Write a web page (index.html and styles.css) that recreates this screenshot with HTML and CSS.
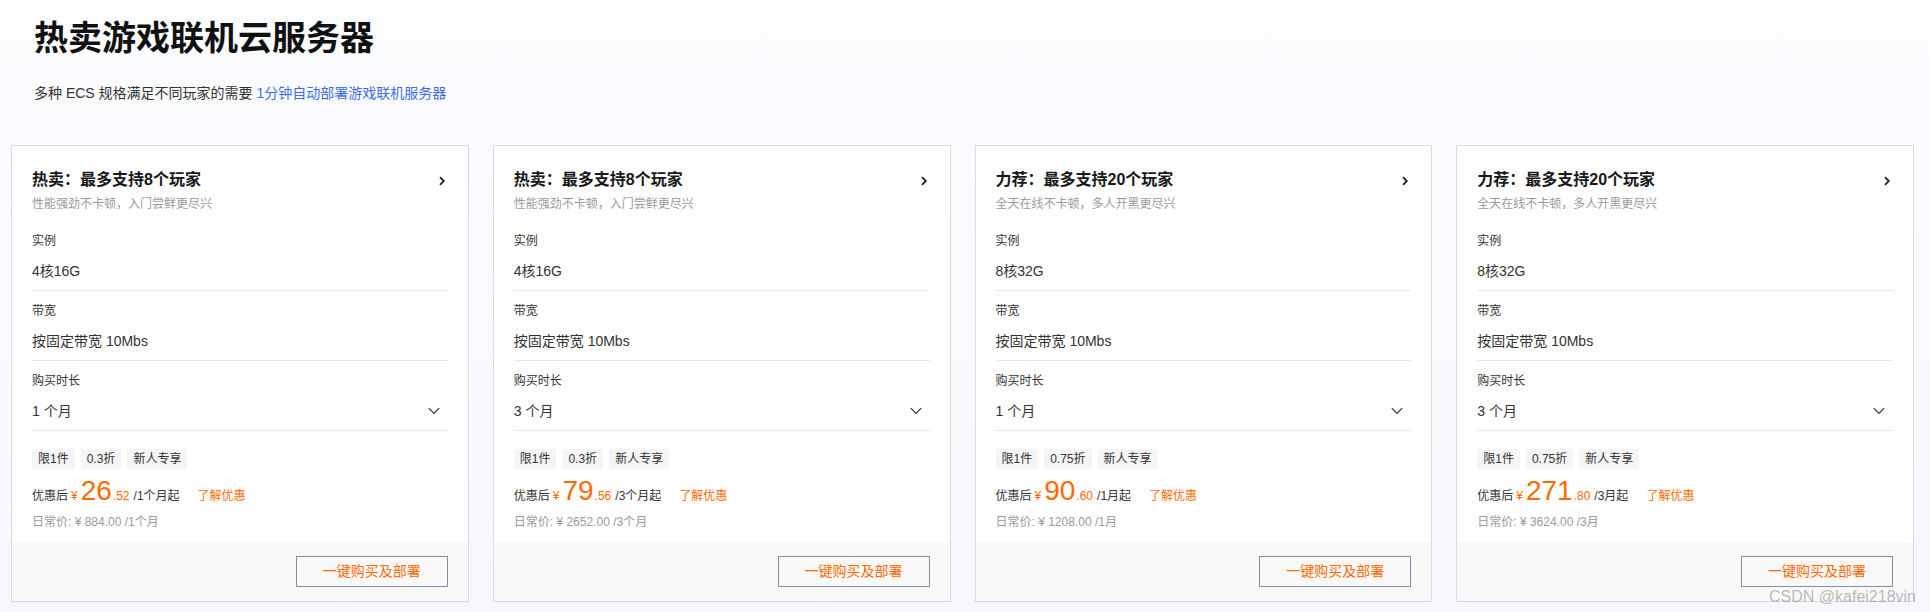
FILE: index.html
```html
<!DOCTYPE html>
<html lang="zh-CN">
<head>
<meta charset="utf-8">
<title>热卖游戏联机云服务器</title>
<link rel="stylesheet" href="styles.css">
</head>
<body>
<div class="page">
  <header class="hero">
    <h1 class="hero-title">热卖游戏联机云服务器</h1>
    <p class="hero-sub">多种 ECS 规格满足不同玩家的需要 <a class="hero-link" href="#">1分钟自动部署游戏联机服务器</a></p>
  </header>

  <section class="cards">
    <!-- card 1 -->
    <div class="card">
      <div class="card-body">
        <div class="card-head">
          <div class="card-title">热卖：最多支持8个玩家</div>
          <svg class="arrow-right" width="12" height="12" viewBox="0 0 12 12"><path d="M4 2.2 L7.8 6 L4 9.8" fill="none" stroke="#222" stroke-width="1.8"/></svg>
        </div>
        <div class="card-desc">性能强劲不卡顿，入门尝鲜更尽兴</div>
        <div class="spec spec-first">
          <div class="spec-label">实例</div>
          <div class="spec-value">4核16G</div>
        </div>
        <div class="spec">
          <div class="spec-label">带宽</div>
          <div class="spec-value">按固定带宽 10Mbs</div>
        </div>
        <div class="spec">
          <div class="spec-label">购买时长</div>
          <div class="spec-value select"><span>1 个月</span><svg class="arrow-down" width="12" height="8" viewBox="0 0 12 8"><path d="M0.8 1.2 L6 6.4 L11.2 1.2" fill="none" stroke="#333" stroke-width="1.2"/></svg></div>
        </div>
        <div class="tags"><span class="tag">限1件</span><span class="tag">0.3折</span><span class="tag">新人专享</span></div>
        <div class="price">
          <span class="price-label">优惠后</span><span class="yen">¥</span><span class="big">26</span><span class="cents">.52</span><span class="unit">/1个月起</span><a class="more" href="#">了解优惠</a>
        </div>
        <div class="regular">日常价: ¥ 884.00 /1个月</div>
      </div>
      <div class="card-foot"><a class="buy" href="#">一键购买及部署</a></div>
    </div>

    <!-- card 2 -->
    <div class="card">
      <div class="card-body">
        <div class="card-head">
          <div class="card-title">热卖：最多支持8个玩家</div>
          <svg class="arrow-right" width="12" height="12" viewBox="0 0 12 12"><path d="M4 2.2 L7.8 6 L4 9.8" fill="none" stroke="#222" stroke-width="1.8"/></svg>
        </div>
        <div class="card-desc">性能强劲不卡顿，入门尝鲜更尽兴</div>
        <div class="spec spec-first">
          <div class="spec-label">实例</div>
          <div class="spec-value">4核16G</div>
        </div>
        <div class="spec">
          <div class="spec-label">带宽</div>
          <div class="spec-value">按固定带宽 10Mbs</div>
        </div>
        <div class="spec">
          <div class="spec-label">购买时长</div>
          <div class="spec-value select"><span>3 个月</span><svg class="arrow-down" width="12" height="8" viewBox="0 0 12 8"><path d="M0.8 1.2 L6 6.4 L11.2 1.2" fill="none" stroke="#333" stroke-width="1.2"/></svg></div>
        </div>
        <div class="tags"><span class="tag">限1件</span><span class="tag">0.3折</span><span class="tag">新人专享</span></div>
        <div class="price">
          <span class="price-label">优惠后</span><span class="yen">¥</span><span class="big">79</span><span class="cents">.56</span><span class="unit">/3个月起</span><a class="more" href="#">了解优惠</a>
        </div>
        <div class="regular">日常价: ¥ 2652.00 /3个月</div>
      </div>
      <div class="card-foot"><a class="buy" href="#">一键购买及部署</a></div>
    </div>

    <!-- card 3 -->
    <div class="card">
      <div class="card-body">
        <div class="card-head">
          <div class="card-title">力荐：最多支持20个玩家</div>
          <svg class="arrow-right" width="12" height="12" viewBox="0 0 12 12"><path d="M4 2.2 L7.8 6 L4 9.8" fill="none" stroke="#222" stroke-width="1.8"/></svg>
        </div>
        <div class="card-desc">全天在线不卡顿，多人开黑更尽兴</div>
        <div class="spec spec-first">
          <div class="spec-label">实例</div>
          <div class="spec-value">8核32G</div>
        </div>
        <div class="spec">
          <div class="spec-label">带宽</div>
          <div class="spec-value">按固定带宽 10Mbs</div>
        </div>
        <div class="spec">
          <div class="spec-label">购买时长</div>
          <div class="spec-value select"><span>1 个月</span><svg class="arrow-down" width="12" height="8" viewBox="0 0 12 8"><path d="M0.8 1.2 L6 6.4 L11.2 1.2" fill="none" stroke="#333" stroke-width="1.2"/></svg></div>
        </div>
        <div class="tags"><span class="tag">限1件</span><span class="tag">0.75折</span><span class="tag">新人专享</span></div>
        <div class="price">
          <span class="price-label">优惠后</span><span class="yen">¥</span><span class="big">90</span><span class="cents">.60</span><span class="unit">/1月起</span><a class="more" href="#">了解优惠</a>
        </div>
        <div class="regular">日常价: ¥ 1208.00 /1月</div>
      </div>
      <div class="card-foot"><a class="buy" href="#">一键购买及部署</a></div>
    </div>

    <!-- card 4 -->
    <div class="card">
      <div class="card-body">
        <div class="card-head">
          <div class="card-title">力荐：最多支持20个玩家</div>
          <svg class="arrow-right" width="12" height="12" viewBox="0 0 12 12"><path d="M4 2.2 L7.8 6 L4 9.8" fill="none" stroke="#222" stroke-width="1.8"/></svg>
        </div>
        <div class="card-desc">全天在线不卡顿，多人开黑更尽兴</div>
        <div class="spec spec-first">
          <div class="spec-label">实例</div>
          <div class="spec-value">8核32G</div>
        </div>
        <div class="spec">
          <div class="spec-label">带宽</div>
          <div class="spec-value">按固定带宽 10Mbs</div>
        </div>
        <div class="spec">
          <div class="spec-label">购买时长</div>
          <div class="spec-value select"><span>3 个月</span><svg class="arrow-down" width="12" height="8" viewBox="0 0 12 8"><path d="M0.8 1.2 L6 6.4 L11.2 1.2" fill="none" stroke="#333" stroke-width="1.2"/></svg></div>
        </div>
        <div class="tags"><span class="tag">限1件</span><span class="tag">0.75折</span><span class="tag">新人专享</span></div>
        <div class="price">
          <span class="price-label">优惠后</span><span class="yen">¥</span><span class="big">271</span><span class="cents">.80</span><span class="unit">/3月起</span><a class="more" href="#">了解优惠</a>
        </div>
        <div class="regular">日常价: ¥ 3624.00 /3月</div>
      </div>
      <div class="card-foot"><a class="buy" href="#">一键购买及部署</a></div>
    </div>
  </section>
  <div class="watermark">CSDN @kafei218vin</div>
</div>
</body>
</html>
```

FILE: styles.css
```css
* { box-sizing: border-box; }

html, body {
  margin: 0;
  padding: 0;
}

body {
  background: linear-gradient(180deg, #fcfdff 0%, #f7f8fd 100%);
  font-family: "Liberation Sans", "Noto Sans CJK SC", Arial, sans-serif;
  color: #333;
  width: 1930px;
  height: 612px;
  overflow: hidden;
}

.page {
  position: relative;
  height: 612px;
  padding: 0 16px 0 11px;
}

.hero {
  padding: 16px 23px 0;
}

.hero-title {
  margin: 0;
  font-size: 34px;
  line-height: 44px;
  font-weight: 700;
  color: #111;
}

.hero-sub {
  margin: 22px 0 0;
  font-size: 14px;
  line-height: 22px;
  color: #333;
}

.hero-link {
  color: #3b6cf3;
  text-decoration: none;
}

.cards {
  margin-top: 41px;
  display: grid;
  grid-template-columns: repeat(4, 1fr);
  column-gap: 24px;
}

.card {
  background: #fff;
  border: 1px solid #d9dbe3;
  display: flex;
  flex-direction: column;
  height: 457px;
}

.card-body {
  padding: 22px 20px 0;
  flex: 1;
}

.card-head {
  display: flex;
  align-items: center;
  justify-content: space-between;
  height: 24px;
}

.card-title {
  font-size: 16px;
  line-height: 24px;
  font-weight: 700;
  color: #181818;
}

.arrow-right {
  display: block;
  margin-top: 2px;
}

.card-desc {
  margin-top: 2px;
  font-size: 12px;
  line-height: 20px;
  color: #9a9a9a;
}

.spec {
  padding: 10px 0 9px;
  border-bottom: 1px solid #e8e8ea;
}

.spec-first {
  margin-top: 7px;
}

.spec-label {
  font-size: 12px;
  line-height: 20px;
  color: #333;
}

.spec-value {
  margin-top: 10px;
  font-size: 14px;
  line-height: 20px;
  color: #333;
}

.select {
  display: flex;
  align-items: center;
  justify-content: space-between;
}

.arrow-down {
  display: block;
  margin-right: 8px;
}

.tags {
  margin-top: 18px;
  display: flex;
  gap: 6px;
}

.tag {
  display: inline-block;
  height: 20px;
  line-height: 20px;
  padding: 0 6px;
  font-size: 12px;
  color: #333;
  background: #f5f5f6;
}

.price {
  margin-top: 6px;
  display: flex;
  align-items: baseline;
  height: 32px;
  font-size: 12px;
}

.price-label {
  color: #333;
}

.yen {
  color: #ff6a00;
  margin: 0 3px 0 3px;
}

.big {
  font-size: 28px;
  line-height: 32px;
  color: #ff6a00;
}

.cents {
  color: #ff6a00;
  margin-left: 1px;
}

.unit {
  color: #333;
  margin-left: 4px;
}

.more {
  color: #ff6a00;
  margin-left: 18px;
  text-decoration: none;
}

.regular {
  margin-top: 5px;
  font-size: 12px;
  line-height: 20px;
  color: #9a9a9a;
}

.card-foot {
  background: #f9f9f9;
  padding: 14px 20px;
  display: flex;
  justify-content: flex-end;
}

.buy {
  display: block;
  width: 152px;
  height: 31px;
  line-height: 29px;
  border: 1px solid #8190ab;
  text-align: center;
  font-size: 14px;
  color: #ff6a00;
  text-decoration: none;
}

.watermark {
  position: absolute;
  right: 14px;
  bottom: 5px;
  font-size: 16px;
  line-height: 20px;
  color: rgba(140, 140, 140, 0.6);
  font-family: "Liberation Sans", Arial, sans-serif;
}
```
